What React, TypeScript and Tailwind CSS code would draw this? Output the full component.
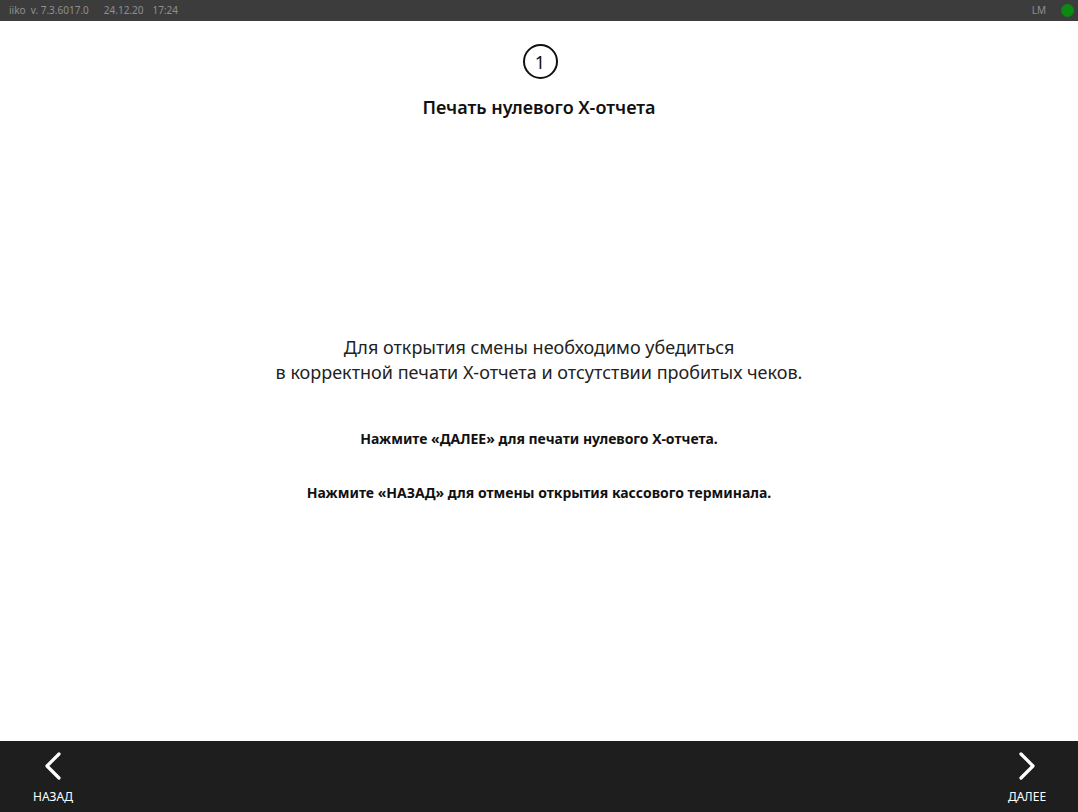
import React from 'react'

function Chevron({ dir }: { dir: 'left' | 'right' }) {
    return (
        <svg width="20" height="28" viewBox="0 0 20 28" fill="none" stroke="white" strokeWidth="3.2" strokeLinecap="round" strokeLinejoin="round">
            {dir === 'left' ? <path d="M16 2 L4 14 L16 26" /> : <path d="M4 2 L16 14 L4 26" />}
        </svg>
    )
}

export default function App() {
    return (
        <div className="flex h-[812px] w-[1078px] flex-col overflow-hidden bg-white font-['Noto_Sans',sans-serif]">
            {/* status bar */}
            <div className="flex h-[21px] items-center justify-between bg-[#3c3c3c] pl-[9px] pr-[4px] text-[10px] text-[#8f8f8f]">
                <div className="flex gap-[15px]">
                    <span>iiko&nbsp; v. 7.3.6017.0</span>
                    <span className="flex gap-[9px]">
                        <span>24.12.20</span>
                        <span>17:24</span>
                    </span>
                </div>
                <div className="flex items-center gap-[15px]">
                    <span>LM</span>
                    <span className="h-[13px] w-[13px] rounded-full bg-[#0b8a12]" />
                </div>
            </div>

            {/* content */}
            <main className="flex flex-1 flex-col items-center text-[#111]">
                <div className="ml-[2px] mt-[23px] flex h-[35px] w-[35px] items-center justify-center rounded-full border-2 border-[#111] text-[18px] leading-none">
                    1
                </div>
                <h1 className="mt-[16px] text-[18px] font-semibold leading-[24px]">Печать нулевого Х-отчета</h1>

                <p className="mt-[216px] text-center text-[18px] leading-[25px] text-[#222]">
                    Для открытия смены необходимо убедиться
                    <br />в корректной печати Х-отчета и отсутствии пробитых чеков.
                </p>

                <p className="mt-[44px] text-[14px] font-bold leading-[20px]">Нажмите «ДАЛЕЕ» для печати нулевого Х-отчета.</p>
                <p className="mt-[34px] text-[14px] font-bold leading-[20px]">Нажмите «НАЗАД» для отмены открытия кассового терминала.</p>
            </main>

            {/* bottom bar */}
            <div className="flex h-[71px] items-start justify-between bg-[#1e1e1e] pl-[31px] pr-[29px] pt-[11px] text-white">
                <button className="flex w-[44px] flex-col items-center gap-[9px]">
                    <Chevron dir="left" />
                    <span className="text-[12px] leading-[16px]">НАЗАД</span>
                </button>
                <button className="flex w-[44px] flex-col items-center gap-[9px]">
                    <Chevron dir="right" />
                    <span className="text-[12px] leading-[16px]">ДАЛЕЕ</span>
                </button>
            </div>
        </div>
    )
}
